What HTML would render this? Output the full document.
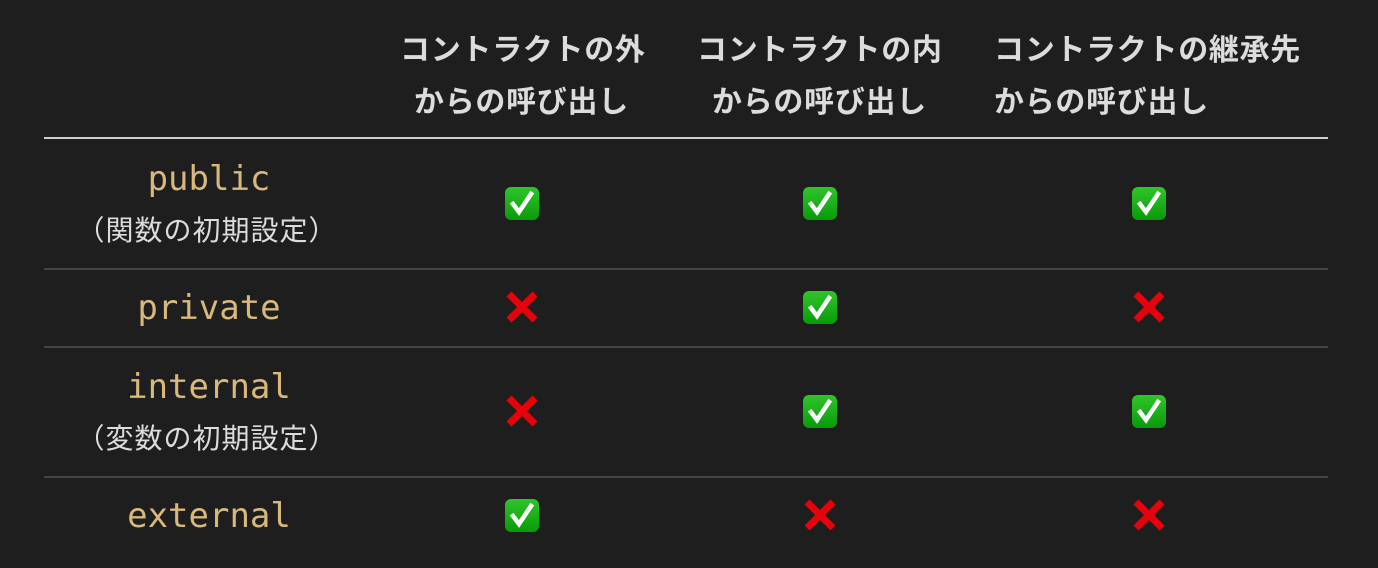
<!DOCTYPE html>
<html><head><meta charset="utf-8"><style>
html,body{margin:0;padding:0;background:#1e1e1e;width:1378px;height:568px;overflow:hidden;position:relative}
.t{position:absolute;white-space:nowrap;line-height:1}
.h{font-family:"Liberation Sans","Noto Sans CJK JP",sans-serif;font-weight:bold;font-size:30px;color:#dcdcdc;letter-spacing:0.7px}
.m{font-family:"DejaVu Sans Mono","Liberation Mono",monospace;font-size:34px;color:#d9b87c;transform:translateX(-50%)}
.j{font-family:"Liberation Sans","Noto Sans CJK JP",sans-serif;font-size:28px;color:#dcdcdc;transform:translateX(-50%);letter-spacing:1px}
.line{position:absolute;left:44px;width:1284px;height:2px;background:#444}
.ok{position:absolute;width:34px;height:33px;border-radius:6px;background:linear-gradient(#2fc62a,#0a9a0a);}
.ok svg{position:absolute;left:0;top:0}
.ng{position:absolute;width:34px;height:34px}
</style></head><body>
<div class="t h" style="left:400px;top:36px">コントラクトの外</div>
<div class="t h" style="left:414px;top:88px">からの呼び出し</div>
<div class="t h" style="left:697px;top:36px">コントラクトの内</div>
<div class="t h" style="left:712px;top:88px">からの呼び出し</div>
<div class="t h" style="left:994px;top:36px">コントラクトの継承先</div>
<div class="t h" style="left:994px;top:88px">からの呼び出し</div>
<div class="line" style="top:137px;background:#cfcfcf"></div>
<div class="line" style="top:268px"></div>
<div class="line" style="top:346px"></div>
<div class="line" style="top:476px"></div>

<div class="t m" style="left:209px;top:162px">public</div>
<div class="t j" style="left:207px;top:217px">（関数の初期設定）</div>
<div class="t m" style="left:209px;top:291px">private</div>
<div class="t m" style="left:209px;top:370px">internal</div>
<div class="t j" style="left:207px;top:425px">（変数の初期設定）</div>
<div class="t m" style="left:209px;top:499px">external</div>

<svg width="0" height="0" style="position:absolute"><defs>
<symbol id="ck" viewBox="0 0 34 33"><path d="M8 17 L14 25 L26 7" fill="none" stroke="#fff" stroke-width="4.5" stroke-linecap="square"/></symbol>
<symbol id="x" viewBox="0 0 34 34"><path d="M4 4 L30 30 M30 4 L4 30" stroke="#e8000a" stroke-width="7"/></symbol>
</defs></svg>

<div class="ok" style="left:505px;top:187px"><svg width="34" height="33"><use href="#ck"/></svg></div>
<div class="ok" style="left:803px;top:187px"><svg width="34" height="33"><use href="#ck"/></svg></div>
<div class="ok" style="left:1132px;top:187px"><svg width="34" height="33"><use href="#ck"/></svg></div>

<svg class="ng" style="left:505px;top:290px"><use href="#x"/></svg>
<div class="ok" style="left:803px;top:291px"><svg width="34" height="33"><use href="#ck"/></svg></div>
<svg class="ng" style="left:1132px;top:290px"><use href="#x"/></svg>

<svg class="ng" style="left:505px;top:394px"><use href="#x"/></svg>
<div class="ok" style="left:803px;top:395px"><svg width="34" height="33"><use href="#ck"/></svg></div>
<div class="ok" style="left:1132px;top:395px"><svg width="34" height="33"><use href="#ck"/></svg></div>

<div class="ok" style="left:505px;top:499px"><svg width="34" height="33"><use href="#ck"/></svg></div>
<svg class="ng" style="left:803px;top:498px"><use href="#x"/></svg>
<svg class="ng" style="left:1132px;top:498px"><use href="#x"/></svg>
</body></html>
